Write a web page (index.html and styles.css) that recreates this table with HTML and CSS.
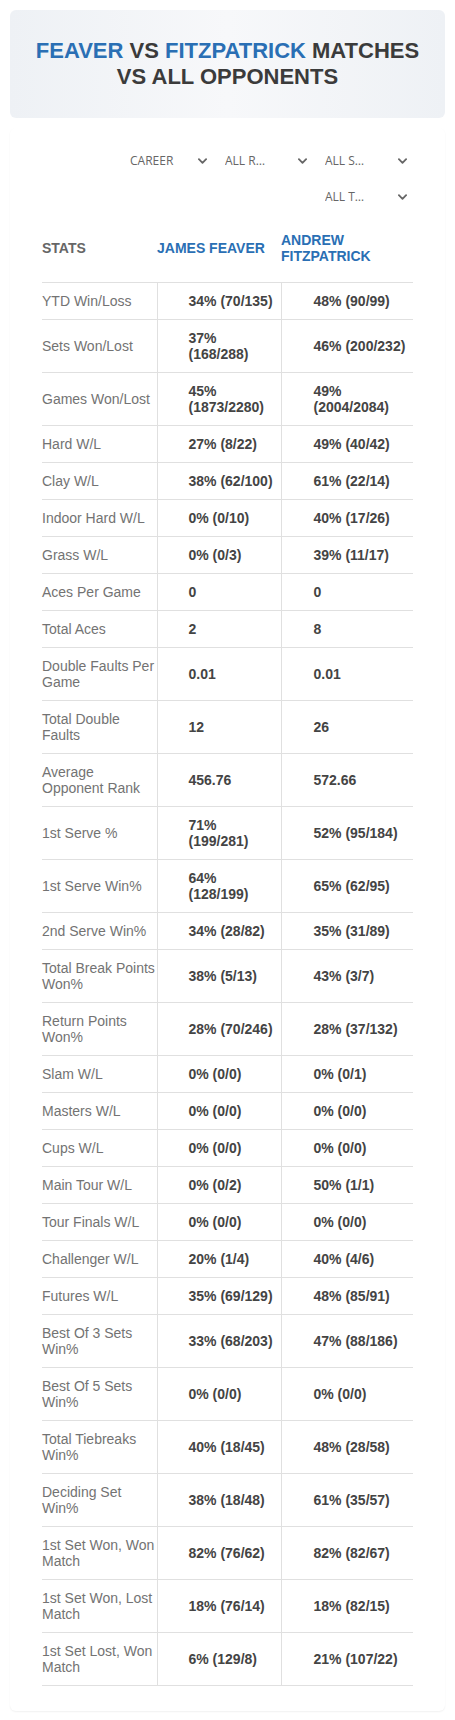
FILE: index.html
```html
<!DOCTYPE html>
<html>
<head>
  <title>Feaver vs Fitzpatrick</title>
  <link rel="stylesheet" href="styles.css">
</head>
<body>
  <div class="page">
    <header class="title-box">
      <h1 class="title"><span class="player">FEAVER</span> VS <span class="player">FITZPATRICK</span> MATCHES VS ALL OPPONENTS</h1>
    </header>

    <section class="card">
      <div class="filters">
        <div class="filter filter-first">
          <span class="filter-text">CAREER</span>
          <svg class="chevron" viewBox="0 0 10 6"><polyline points="1,1 5,5 9,1"/></svg>
        </div>
        <div class="filter">
          <span class="filter-text">ALL ROUNDS</span>
          <svg class="chevron" viewBox="0 0 10 6"><polyline points="1,1 5,5 9,1"/></svg>
        </div>
        <div class="filter">
          <span class="filter-text">ALL SURFACES</span>
          <svg class="chevron" viewBox="0 0 10 6"><polyline points="1,1 5,5 9,1"/></svg>
        </div>
        <div class="filter">
          <span class="filter-text">ALL TOURNAMENTS</span>
          <svg class="chevron" viewBox="0 0 10 6"><polyline points="1,1 5,5 9,1"/></svg>
        </div>
      </div>

      <table class="stats">
        <colgroup>
          <col class="col-label">
          <col class="col-p1">
          <col class="col-p2">
        </colgroup>
        <thead>
          <tr>
            <th class="stat-head">STATS</th>
            <th class="player-head">JAMES FEAVER</th>
            <th class="player-head">ANDREW FITZPATRICK</th>
          </tr>
        </thead>
        <tbody>
          <tr><td>YTD Win/Loss</td><td>34% (70/135)</td><td>48% (90/99)</td></tr>
          <tr><td>Sets Won/Lost</td><td>37% (168/288)</td><td>46% (200/232)</td></tr>
          <tr><td>Games Won/Lost</td><td>45% (1873/2280)</td><td>49% (2004/2084)</td></tr>
          <tr><td>Hard W/L</td><td>27% (8/22)</td><td>49% (40/42)</td></tr>
          <tr><td>Clay W/L</td><td>38% (62/100)</td><td>61% (22/14)</td></tr>
          <tr><td>Indoor Hard W/L</td><td>0% (0/10)</td><td>40% (17/26)</td></tr>
          <tr><td>Grass W/L</td><td>0% (0/3)</td><td>39% (11/17)</td></tr>
          <tr><td>Aces Per Game</td><td>0</td><td>0</td></tr>
          <tr><td>Total Aces</td><td>2</td><td>8</td></tr>
          <tr><td>Double Faults Per Game</td><td>0.01</td><td>0.01</td></tr>
          <tr><td>Total Double Faults</td><td>12</td><td>26</td></tr>
          <tr><td>Average Opponent Rank</td><td>456.76</td><td>572.66</td></tr>
          <tr><td>1st Serve %</td><td>71% (199/281)</td><td>52% (95/184)</td></tr>
          <tr><td>1st Serve Win%</td><td>64% (128/199)</td><td>65% (62/95)</td></tr>
          <tr><td>2nd Serve Win%</td><td>34% (28/82)</td><td>35% (31/89)</td></tr>
          <tr><td>Total Break Points Won%</td><td>38% (5/13)</td><td>43% (3/7)</td></tr>
          <tr><td>Return Points Won%</td><td>28% (70/246)</td><td>28% (37/132)</td></tr>
          <tr><td>Slam W/L</td><td>0% (0/0)</td><td>0% (0/1)</td></tr>
          <tr><td>Masters W/L</td><td>0% (0/0)</td><td>0% (0/0)</td></tr>
          <tr><td>Cups W/L</td><td>0% (0/0)</td><td>0% (0/0)</td></tr>
          <tr><td>Main Tour W/L</td><td>0% (0/2)</td><td>50% (1/1)</td></tr>
          <tr><td>Tour Finals W/L</td><td>0% (0/0)</td><td>0% (0/0)</td></tr>
          <tr><td>Challenger W/L</td><td>20% (1/4)</td><td>40% (4/6)</td></tr>
          <tr><td>Futures W/L</td><td>35% (69/129)</td><td>48% (85/91)</td></tr>
          <tr><td>Best Of 3 Sets Win%</td><td>33% (68/203)</td><td>47% (88/186)</td></tr>
          <tr><td>Best Of 5 Sets Win%</td><td>0% (0/0)</td><td>0% (0/0)</td></tr>
          <tr><td>Total Tiebreaks Win%</td><td>40% (18/45)</td><td>48% (28/58)</td></tr>
          <tr><td>Deciding Set Win%</td><td>38% (18/48)</td><td>61% (35/57)</td></tr>
          <tr><td>1st Set Won, Won Match</td><td>82% (76/62)</td><td>82% (82/67)</td></tr>
          <tr><td>1st Set Won, Lost Match</td><td>18% (76/14)</td><td>18% (82/15)</td></tr>
          <tr><td>1st Set Lost, Won Match</td><td>6% (129/8)</td><td>21% (107/22)</td></tr>
        </tbody>
      </table>
    </section>
  </div>
</body>
</html>
```

FILE: styles.css
```css
:root {
  --blue: #2a6fb4;
  --text-dark: #3b3b3b;
  --text-value: #444444;
  --text-muted: #737373;
  --line: #e0e0e0;
}

* {
  margin: 0;
  padding: 0;
  box-sizing: border-box;
}

body {
  background: #ffffff;
  font-family: "Liberation Sans", Arial, sans-serif;
  color: var(--text-dark);
}

.page {
  width: 455px;
  padding: 10px;
}

/* Title banner */
.title-box {
  padding: 28px 20px;
  border-radius: 6px;
  background: linear-gradient(90deg, #eef1f5 0%, #f7f8fa 50%, #eef1f5 100%);
}

.title {
  font-size: 22px;
  line-height: 1.18;
  font-weight: 700;
  text-align: center;
  color: var(--text-dark);
}

.title .player {
  color: var(--blue);
}

/* Card with filters and table */
.card {
  margin-top: 10px;
  padding: 15px 32px 25px;
  background: #ffffff;
  border-radius: 6px;
  box-shadow: 0 1px 2px rgba(0, 0, 0, 0.06);
}

.filters {
  display: flex;
  flex-wrap: wrap;
  justify-content: flex-end;
}

.filter {
  display: flex;
  align-items: center;
  justify-content: space-between;
  width: 100px;
  height: 36px;
  padding: 0 6px 0 12px;
  font-family: "Open Sans", "Noto Sans", sans-serif;
  font-size: 12px;
  color: #666666;
}

.filter-first {
  padding-left: 17px;
}

.filter-text {
  width: 46px;
  white-space: nowrap;
  overflow: hidden;
  text-overflow: ellipsis;
}

.chevron {
  width: 9px;
  height: 6px;
  fill: none;
  stroke: #666666;
  stroke-width: 2;
  stroke-linecap: round;
  stroke-linejoin: round;
}

/* Stats table */
.stats {
  width: 100%;
  table-layout: fixed;
  border-collapse: collapse;
  font-size: 14px;
  line-height: 16px;
}

.col-label { width: 115px; }
.col-p1 { width: 124px; }
.col-p2 { width: 132px; }

.stats th {
  padding: 17px 0 18px;
  font-weight: 700;
  text-align: left;
  vertical-align: middle;
  border-bottom: 1px solid var(--line);
}

.stat-head {
  color: #666666;
}

.player-head {
  color: var(--blue);
}

.stats td {
  padding: 10px 0;
  vertical-align: middle;
  border-bottom: 1px solid var(--line);
  color: var(--text-muted);
}

.stats td:nth-child(2),
.stats td:nth-child(3) {
  font-weight: 700;
  color: var(--text-value);
}

.stats td:nth-child(1),
.stats td:nth-child(2) {
  border-right: 1px solid var(--line);
}

.stats td:nth-child(2) {
  padding: 10px 5px 10px 31px;
}

.stats td:nth-child(3) {
  padding: 10px 4px 10px 32px;
}
```
